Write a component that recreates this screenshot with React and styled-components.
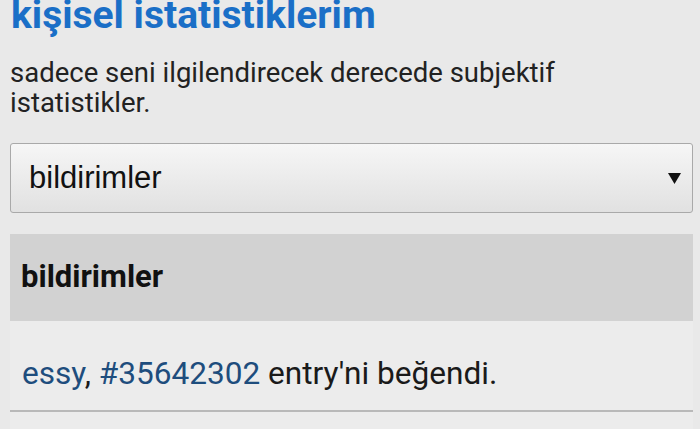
import React from 'react';
import styled, { createGlobalStyle } from 'styled-components';

const GlobalStyle = createGlobalStyle`
  html, body {
    margin: 0;
    padding: 0;
    background: #e9e9e9;
    font-family: Roboto, "Noto Sans", sans-serif;
    overflow: hidden;
  }
`;

const Page = styled.div`
  width: 700px;
  height: 429px;
  padding: 0 7px 0 10px;
  box-sizing: border-box;
  overflow: hidden;
`;

const Title = styled.h1`
  margin: -4px 0 0 1px;
  font-size: 39px;
  line-height: 38px;
  font-weight: 700;
  color: #1a6fc7;
  white-space: nowrap;
`;

const Intro = styled.p`
  margin: 24px 0 0;
  font-size: 27.5px;
  line-height: 30px;
  color: #222;
`;

const Select = styled.div`
  margin-top: 25px;
  height: 70px;
  display: flex;
  align-items: center;
  justify-content: space-between;
  padding: 0 11px 0 18px;
  border: 1px solid #a9a9a9;
  border-radius: 3px;
  background: linear-gradient(#f6f6f6, #e1e1e1);
  box-sizing: border-box;
  font-family: "Liberation Sans", Arial, sans-serif;
  font-size: 31px;
  line-height: 36px;
  color: #111;
`;

const Arrow = styled.svg`
  width: 13px;
  height: 11px;
  display: block;
`;

const Section = styled.section`
  margin-top: 21px;
  background: #ececec;
  min-height: 200px;
`;

const SectionHead = styled.h2`
  margin: 0;
  height: 87px;
  padding: 25px 0 0 11px;
  box-sizing: border-box;
  background: #d2d2d2;
  font-size: 31px;
  line-height: 36px;
  font-weight: 700;
  color: #111;
`;

const Item = styled.div`
  height: 91px;
  padding: 35px 0 0 12px;
  box-sizing: border-box;
  background: #ececec;
  border-bottom: 2px solid #b9b9b9;
  font-size: 31.6px;
  line-height: 36px;
  color: #1a1a1a;
  white-space: nowrap;
`;

const Link = styled.a`
  color: #1e4d7d;
  text-decoration: none;
`;

export default function App() {
  return (
    <>
      <GlobalStyle />
      <Page>
        <Title>kişisel istatistiklerim</Title>
        <Intro>
          sadece seni ilgilendirecek derecede subjektif
          <br />
          istatistikler.
        </Intro>
        <Select>
          <span>bildirimler</span>
          <Arrow viewBox="0 0 13 11">
            <polygon points="0,0 13,0 6.5,11" fill="#111" />
          </Arrow>
        </Select>
        <Section>
          <SectionHead>bildirimler</SectionHead>
          <Item>
            <Link href="#">essy</Link>, <Link href="#">#35642302</Link> entry'ni beğendi.
          </Item>
        </Section>
      </Page>
    </>
  );
}
